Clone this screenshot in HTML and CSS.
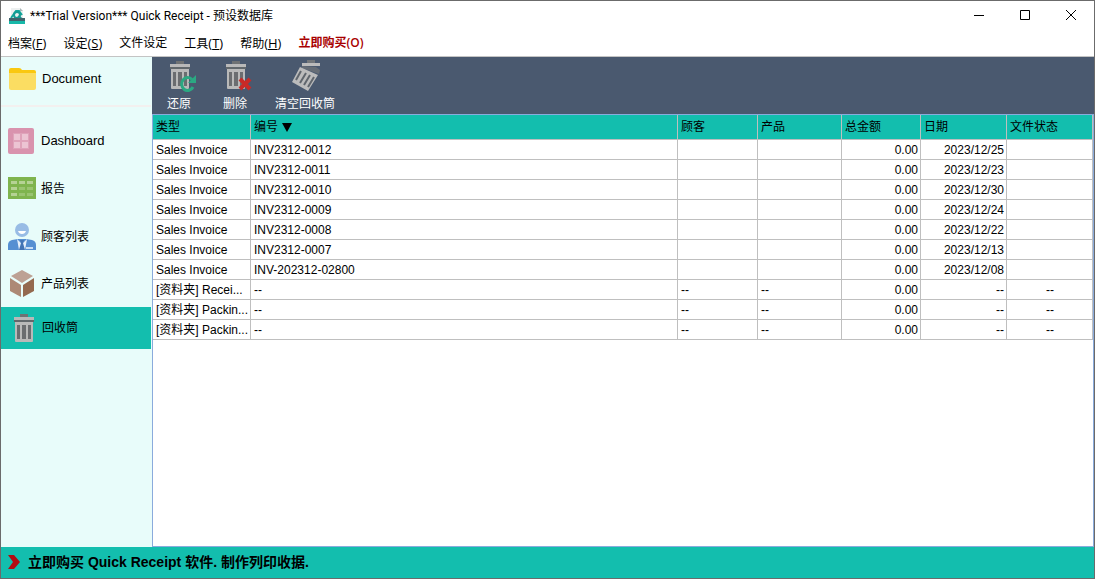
FILE: index.html
```html
<!DOCTYPE html>
<html lang="zh-Hans">
<head>
<meta charset="utf-8">
<title>Quick Receipt</title>
<link rel="stylesheet" href="styles.css">
</head>
<body>
<svg class="defs" aria-hidden="true">
  <symbol id="bin" viewBox="0 0 20 28">
    <path d="M6 0h8v3H6z" fill="#6f7274"/>
    <path d="M0 3h20v3H0z" fill="#b9b9b9"/>
    <path d="M0 6h20v2H0z" fill="#62686c"/>
    <path d="M1 8h18v19q0 1-1 1H2q-1 0-1-1z" fill="#b9b9b9"/>
    <path d="M3 11h3v14H3zM8 11h4v14H8zM14 11h3v14h-3z" fill="#6b6d70"/>
  </symbol>
</svg>
<div class="window">
  <header class="titlebar">
    <svg class="logo" width="16" height="16" viewBox="0 0 16 16" aria-hidden="true">
      <path d="M2 0h9l3 3v10H2z" fill="#edf0f0"/><path d="M11 0v3h3z" fill="#a9b6b8"/>
      <path d="M2 10 7 3h3l3 4" fill="none" stroke="#12a99c" stroke-width="2"/>
      <circle cx="8" cy="7" r="3" fill="none" stroke="#149c94" stroke-width="2"/>
      <path d="m9 8 4 3" stroke="#149c94" stroke-width="2"/>
      <path d="M0 10h16v3H0z" fill="#42636c"/><path d="M0 13h16v3H0z" fill="#18b8a9"/>
    </svg>
    <h1 class="title">***Trial Version*** Quick Receipt - 预设数据库</h1>
    <div class="window-buttons">
      <button aria-label="Minimize"><svg width="12" height="12"><path d="M1 5.500h10" stroke="#000"/></svg></button>
      <button aria-label="Maximize"><svg width="12" height="12"><path d="M1.500 .500h9v9h-9z" fill="none" stroke="#000"/></svg></button>
      <button aria-label="Close"><svg width="12" height="12"><path d="M1 0l10 10M11 0 1 10" stroke="#000"/></svg></button>
    </div>
  </header>
  <nav class="menu">
    <button>档案<span class="key">(<u>F</u>)</span></button>
    <button>设定<span class="key">(<u>S</u>)</span></button>
    <button>文件设定</button>
    <button>工具<span class="key">(<u>T</u>)</span></button>
    <button>帮助<span class="key">(<u>H</u>)</span></button>
    <button class="buy">立即购买(O)</button>
  </nav>
  <div class="workspace">
    <nav class="sidebar">
      <a class="item document" href="#document">
        <svg width="28" height="24" viewBox="0 0 28 24" aria-hidden="true"><path d="M0 3q0-2 2-2h8q2 0 3 2h12q2 0 2 2v4H0z" fill="#fac810"/><path d="M0 6h27v15q0 2-2 2H2q-2 0-2-2z" fill="#fbdd62"/></svg>
        <span>Document</span></a>
      <a class="item dashboard" href="#dashboard">
        <svg width="28" height="28" viewBox="0 0 28 28" aria-hidden="true"><rect y="1" width="26" height="26" rx="2" fill="#d993ae"/><path d="M5 6h16v16H5z" fill="#dfa3ba"/><path d="M6 7h6v6H6zM14 7h6v6h-6zM6 15h6v6H6zM14 15h6v6h-6z" fill="#ecc4d3"/></svg>
        <span>Dashboard</span></a>
      <a class="item" href="#reports">
        <svg width="28" height="28" viewBox="0 0 28 28" aria-hidden="true"><path d="M0 2h28v22H0z" fill="#7fb44e"/><path d="M3 6h6v3H3zM11 6h6v3h-6zM19 6h6v3h-6zM3 12h6v3H3zM3 18h6v3H3z" fill="#b5d294"/><path d="M11 12h6v3h-6zM19 12h6v3h-6zM11 18h6v3h-6zM19 18h6v3h-6z" fill="#9ac471"/></svg>
        <span>报告</span></a>
      <a class="item" href="#customers">
        <svg width="28" height="28" viewBox="0 0 28 28" aria-hidden="true"><circle cx="14" cy="7" r="7" fill="#98bce5"/><path d="M10 8h8q-1 3-4 3t-4-3z" fill="#fff"/><path d="M0 27v-5q0-4 4-5l6-1h8l6 1q4 1 4 5v5z" fill="#568fd2"/><path d="m9 16 5 5 5-5-2 11h-6z" fill="#e5effb"/><path d="M12 17h4l-1 3 2 7h-6l2-7z" fill="#4374b5"/><path d="M18 24h7v2h-7z" fill="#c9ddf4"/></svg>
        <span>顾客列表</span></a>
      <a class="item products" href="#products">
        <svg width="28" height="28" viewBox="0 0 28 28" aria-hidden="true"><path d="m14 0 11 6-11 7L3 6z" fill="#bda194"/><path d="m2 8 11 7v12L2 21z" fill="#ad8975"/><path d="m26 8-11 7v12l11-6z" fill="#94694f"/></svg>
        <span>产品列表</span></a>
      <a class="item active" href="#recycle" aria-current="page">
        <svg width="28" height="28" aria-hidden="true"><use href="#bin" x="5" width="20" height="28"/></svg>
        <span>回收筒</span></a>
    </nav>
    <main class="content">
      <div class="toolbar">
        <button>
          <svg width="34" height="32" viewBox="0 0 34 32" aria-hidden="true"><use href="#bin" x="8" y="1" width="20" height="28"/><path d="M30 19.500A6 6.500 0 1 0 31 27" fill="none" stroke="#2ba882" stroke-width="3"/><path d="M34 15v8h-8z" fill="#2ba882"/></svg>
          还原</button>
        <button>
          <svg width="34" height="32" viewBox="0 0 34 32" aria-hidden="true"><use href="#bin" x="8" y="1" width="20" height="28"/><path d="m22 19 10 10M32 19 22 29" stroke="#c92a26" stroke-width="4"/></svg>
          删除</button>
        <button>
          <svg width="34" height="32" viewBox="0 0 34 32" aria-hidden="true"><path d="M19 0h8v3h-8z" fill="#73777b"/><path d="m14 6 14 1 4 3-1 4-17-6z" fill="#666d76"/><path d="M14 3h18v3H14z" fill="#bcbcbc"/><path d="m12 7 18 8-10 16L4 22z" fill="#bcbcbc"/><path d="m13 11-5 9M18 13l-6 10M22 15l-6 10M26 17l-6 10" stroke="#60666d" stroke-width="2"/></svg>
          清空回收筒</button>
      </div>
      <div class="table-panel">
        <table>
          <colgroup><col class="c-type"><col><col class="c-customer"><col class="c-product"><col class="c-total"><col class="c-date"><col class="c-status"></colgroup>
          <thead><tr><th>类型</th><th aria-sort="descending"><button>编号 <svg width="10" height="9" aria-hidden="true"><path d="M0 0h10L5 9z"/></svg></button></th><th>顾客</th><th>产品</th><th>总金额</th><th>日期</th><th>文件状态</th></tr></thead>
          <tbody>
            <tr><td>Sales Invoice</td><td>INV2312-0012</td><td></td><td></td><td>0.00</td><td>2023/12/25</td><td></td></tr>
            <tr><td>Sales Invoice</td><td>INV2312-0011</td><td></td><td></td><td>0.00</td><td>2023/12/23</td><td></td></tr>
            <tr><td>Sales Invoice</td><td>INV2312-0010</td><td></td><td></td><td>0.00</td><td>2023/12/30</td><td></td></tr>
            <tr><td>Sales Invoice</td><td>INV2312-0009</td><td></td><td></td><td>0.00</td><td>2023/12/24</td><td></td></tr>
            <tr><td>Sales Invoice</td><td>INV2312-0008</td><td></td><td></td><td>0.00</td><td>2023/12/22</td><td></td></tr>
            <tr><td>Sales Invoice</td><td>INV2312-0007</td><td></td><td></td><td>0.00</td><td>2023/12/13</td><td></td></tr>
            <tr><td>Sales Invoice</td><td>INV-202312-02800</td><td></td><td></td><td>0.00</td><td>2023/12/08</td><td></td></tr>
            <tr><td>[资料夹] Recei...</td><td>--</td><td>--</td><td>--</td><td>0.00</td><td>--</td><td>--</td></tr>
            <tr><td>[资料夹] Packin...</td><td>--</td><td>--</td><td>--</td><td>0.00</td><td>--</td><td>--</td></tr>
            <tr><td>[资料夹] Packin...</td><td>--</td><td>--</td><td>--</td><td>0.00</td><td>--</td><td>--</td></tr>
          </tbody>
        </table>
      </div>
    </main>
  </div>
  <footer class="promo">
    <a href="#buy"><svg width="12" height="14" viewBox="0 0 12 14" aria-hidden="true"><path d="M0 0h6l6 7-6 7H0l5-7z" fill="#b30d12"/></svg><span>立即购买 Quick Receipt 软件. 制作列印收据.</span></a>
  </footer>
</div>
</body>
</html>
```
FILE: styles.css
```css
* { box-sizing: border-box; }

body {
  margin: 0;
  color: #000;
  font: 12px/16px "Liberation Sans", "Noto Sans CJK SC", sans-serif;
}

button {
  margin: 0;
  padding: 0;
  border: 0;
  background: none;
  color: inherit;
  font: inherit;
}

a { color: inherit; text-decoration: none; }
svg { display: block; flex: none; }
.defs { position: absolute; width: 0; height: 0; }

.window {
  display: flex;
  flex-direction: column;
  min-height: 100vh;
  border: 1px solid #6b6b6b;
  background: #fff;
}

.titlebar {
  display: flex;
  align-items: center;
  gap: 5px;
  height: 29px;
  padding-left: 8px;
}

.title {
  margin: 0;
  font: 12px/16px Roboto, "Noto Sans CJK SC", sans-serif;
}

.window-buttons { display: flex; margin-left: auto; }

.window-buttons button {
  display: grid;
  place-items: center;
  width: 46px;
  height: 28px;
}

.menu {
  display: flex;
  gap: 17px;
  height: 27px;
  padding: 0 7px;
  border-bottom: 1px solid #c4c4c4;
  font: 12px/16px "Open Sans", "Noto Sans CJK SC", sans-serif;
}

.menu .key { font-size: 13px; }
.menu .buy { color: #a80000; font-weight: 600; }

.workspace { display: flex; flex: 1; }

.sidebar {
  width: 151px;
  padding-right: 1px;
  background: #e8fcfa;
}

.item {
  display: flex;
  align-items: center;
  gap: 5px;
  height: 48px;
  padding-left: 7px;
}

.item.document {
  height: 50px;
  margin-bottom: 10px;
  padding: 0 0 4px 8px;
  border-bottom: 2px solid #f3f0ef;
}

.item.document span,
.item.dashboard span { font-size: 13px; }

.item.products { height: 46px; }

.item.active {
  height: 42px;
  padding-left: 8px;
  background: #13beae;
}

.content {
  display: flex;
  flex: 1;
  flex-direction: column;
  min-width: 0;
}

.toolbar {
  display: flex;
  gap: 22px;
  height: 57px;
  padding: 3px 0 0 10px;
  background: #4a596f;
  color: #fff;
}

.toolbar button {
  display: flex;
  flex-direction: column;
  align-items: center;
  gap: 4px;
}

.toolbar button:last-child { margin-left: 1px; }

.table-panel { flex: 1; border: 1px solid #8aabdc; }

table {
  width: 100%;
  border-spacing: 0;
  table-layout: fixed;
}

.c-type { width: 98px; }
.c-customer { width: 80px; }
.c-product { width: 84px; }
.c-total { width: 79px; }
.c-date, .c-status { width: 86px; }

th, td {
  overflow: hidden;
  height: 20px;
  padding: 0 2px 0 3px;
  border: solid #bfbfbf;
  border-width: 0 1px 1px 0;
  text-align: left;
  white-space: nowrap;
}

th {
  height: 25px;
  background: #13beae;
  font-weight: 400;
}

th button { display: flex; align-items: center; gap: 4px; }
td:nth-child(5), td:nth-child(6) { text-align: right; }
td:nth-child(7) { text-align: center; }

.promo {
  height: 31px;
  background: #13beae;
  font-size: 14px;
  font-weight: 700;
}

.promo a {
  display: flex;
  align-items: center;
  gap: 8px;
  height: 30px;
  padding-left: 7px;
}
```
